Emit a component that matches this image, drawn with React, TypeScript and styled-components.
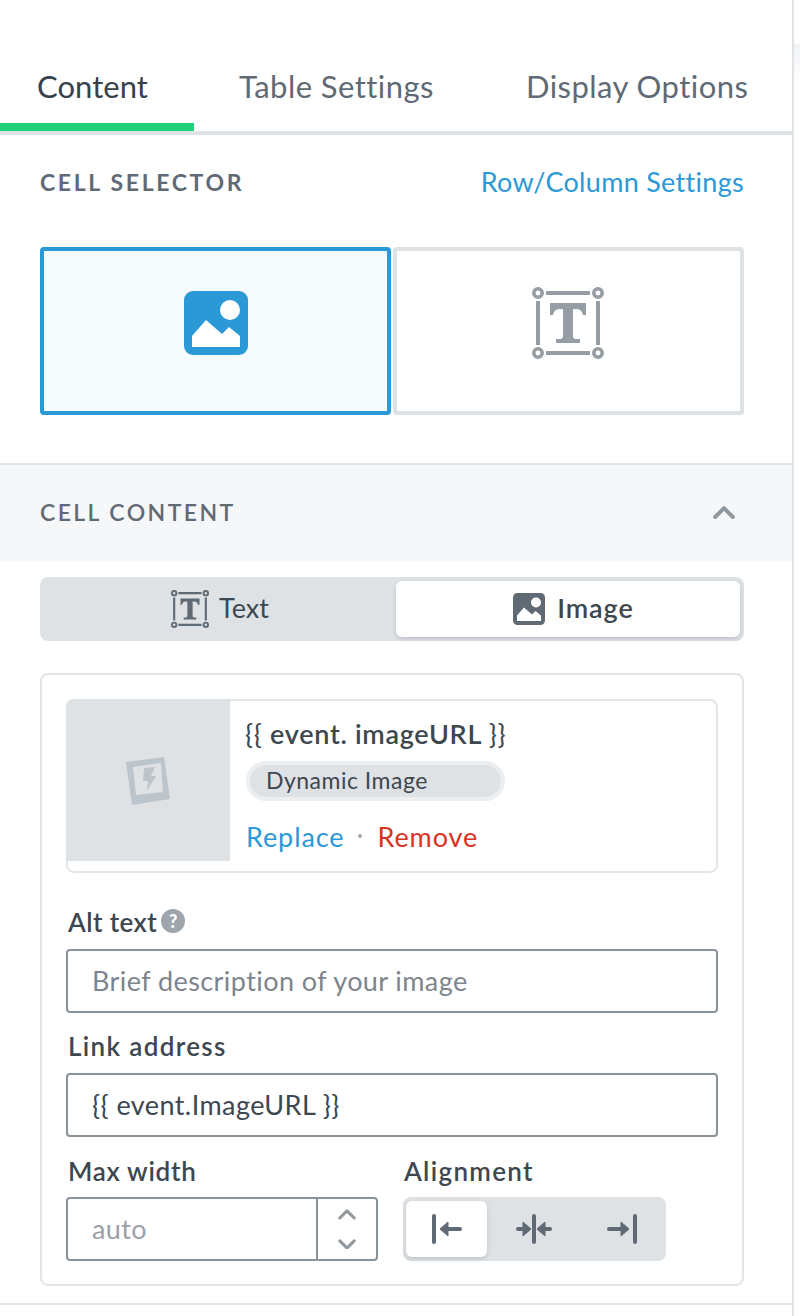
import React from "react";
import styled, { createGlobalStyle } from "styled-components";

const Global = createGlobalStyle`
  html, body { margin: 0; padding: 0; background: #fff; }
  body { font-family: "Lato", "Liberation Sans", sans-serif; color: #3d4750; }
  * { box-sizing: border-box; }
`;

const Page = styled.div`
  width: 800px;
  height: 1316px;
  overflow: hidden;
  display: flex;
  background: #fff;
`;
const Panel = styled.div`
  width: 794px;
  height: 1316px;
  border-right: 2px solid #dfe3e6;
  flex: none;
`;
const Gutter = styled.div`
  flex: 1;
  height: 40px;
  margin-top: 44px;
  background: linear-gradient(#f1f2f4, #fff);
`;
const TabBar = styled.div`
  display: grid;
  grid-template-columns: 194px 332px 1fr;
  border-bottom: 4px solid #dfe3e6;
`;
const Tab = styled.div<{ $active?: boolean; $pad: number }>`
  height: 131px;
  padding: 68px 0 0 ${(p) => p.$pad}px;
  font-size: 31px;
  letter-spacing: ${(p) => (p.$active ? "0.05px" : "0.45px")};
  line-height: 36px;
  white-space: nowrap;
  color: ${(p) => (p.$active ? "#36414a" : "#5f6a74")};
  border-bottom: 8px solid ${(p) => (p.$active ? "#22d07a" : "transparent")};
`;
const SelectorSection = styled.section`
  padding: 30px 48px 48px 40px;
  border-bottom: 2px solid #e3e6e9;
`;
const SectionHead = styled.div`
  display: flex;
  align-items: center;
  justify-content: space-between;
  height: 36px;
`;
const Caps = styled.h2<{ $light?: boolean }>`
  margin: -2px 0 0;
  font-size: 23px;
  line-height: 36px;
  font-weight: ${(p) => (p.$light ? 600 : 700)};
  letter-spacing: ${(p) => (p.$light ? "2.4px" : "2.65px")};
  color: #5f6a74;
  text-transform: uppercase;
`;
const HeadLink = styled.a`
  margin-top: -3px;
  font-size: 27px;
  letter-spacing: 0.3px;
  color: #2b99d6;
  white-space: nowrap;
`;
const Tiles = styled.div`
  margin-top: 46px;
  display: grid;
  grid-template-columns: 351px 351px;
  gap: 2px;
`;
const Tile = styled.div<{ $active?: boolean }>`
  height: 168px;
  padding: 0 ${(p) => (p.$active ? 0 : 2)}px 16px 0;
  border: 4px solid ${(p) => (p.$active ? "#2b99d6" : "#dfe2e5")};
  border-radius: 4px;
  background: ${(p) => (p.$active ? "#f6fbfe" : "#fff")};
  display: flex;
  align-items: center;
  justify-content: center;
`;
const Band = styled.div`
  height: 96px;
  padding: 30px 57px 30px 40px;
  background: #f6f7f9;
  display: flex;
  align-items: center;
  justify-content: space-between;
`;
const Body = styled.div`
  padding: 16px 48px 0 40px;
`;
const Toggle = styled.div`
  height: 64px;
  padding: 4px;
  background: #dfe2e5;
  border-radius: 8px;
  display: grid;
  grid-template-columns: 352px 344px;
`;
const ToggleItem = styled.div<{ $active?: boolean }>`
  display: flex;
  align-items: center;
  justify-content: center;
  padding-left: ${(p) => (p.$active ? 11 : 0)}px;
  gap: ${(p) => (p.$active ? "12px" : "10px")};
  font-size: 27px;
  letter-spacing: ${(p) => (p.$active ? "0.9px" : "0")};
  font-weight: ${(p) => (p.$active ? 600 : 400)};
  border-radius: 6px;
  color: #3d4750;
  background: ${(p) => (p.$active ? "#fff" : "transparent")};
  box-shadow: ${(p) => (p.$active ? "0 2px 4px rgba(90,100,110,.25)" : "none")};
`;
const ToggleLabel = styled.span`
  margin-top: -3px;
`;
const Card = styled.div`
  margin-top: 32px;
  padding: 24px 24px 23px;
  border: 2px solid #e3e6e9;
  border-radius: 8px;
`;
const Preview = styled.div`
  height: 174px;
  border: 2px solid #e3e6e9;
  border-radius: 8px;
  display: flex;
`;
const Thumb = styled.div`
  width: 164px;
  height: 162px;
  margin: -2px 0 0 -2px;
  background: #dfe2e5;
  border-top-left-radius: 8px;
  display: flex;
  align-items: center;
  justify-content: center;
  flex: none;
`;
const Info = styled.div`
  padding: 15px 0 0 15px;
`;
const Title = styled.div`
  font-size: 27px;
  line-height: 36px;
  font-weight: 600;
  letter-spacing: 0.7px;
  color: #3d4750;
  white-space: nowrap;
`;
const Braces = styled.span`
  font-weight: 400;
`;
const Pill = styled.div`
  margin: 9px 0 0 1px;
  width: 259px;
  height: 40px;
  padding-left: 16px;
  border: 4px solid #eceef0;
  border-radius: 20px;
  background: #dfe2e5;
  font-size: 23px;
  letter-spacing: 0.5px;
  line-height: 30px;
  white-space: nowrap;
`;
const Actions = styled.div`
  margin: 17px 0 0 1px;
  display: flex;
  align-items: center;
  height: 36px;
  font-size: 27px;
  letter-spacing: 0.9px;
`;
const ActionLink = styled.a<{ $danger?: boolean }>`
  color: ${(p) => (p.$danger ? "#d9321f" : "#2b99d6")};
`;
const Dot = styled.span`
  width: 4px;
  height: 4px;
  margin: 0 15px 0 14px;
  border-radius: 50%;
  background: #a3aab1;
`;
const Label = styled.label<{ $gap?: number; $pad?: number; $track: number }>`
  display: flex;
  align-items: center;
  gap: 4px;
  height: 36px;
  padding-left: ${(p) => p.$pad ?? 2}px;
  margin-top: ${(p) => p.$gap ?? 0}px;
  font-size: 26px;
  letter-spacing: ${(p) => p.$track}px;
  font-weight: 600;
  color: #3d4750;
  white-space: nowrap;
`;
const Help = styled.span`
  width: 24px;
  height: 24px;
  margin-top: -2px;
  border-radius: 50%;
  background: #9ea5ac;
  color: #fff;
  font-size: 18px;
  letter-spacing: 0;
  line-height: 24px;
  text-align: center;
  font-weight: 900;
`;
const Input = styled.input`
  display: block;
  width: 100%;
  height: 64px;
  margin-top: 9px;
  padding: 0 24px 2px;
  border: 2px solid #8a929a;
  border-radius: 4px;
  outline: none;
  font: 400 27px "Lato", "Liberation Sans", sans-serif;
  letter-spacing: 0.42px;
  color: #3d4750;
  background: #fff;
  &::placeholder { color: #7d858e; opacity: 1; }
`;
const BottomRow = styled.div`
  margin-top: 16px;
  display: grid;
  grid-template-columns: 312px 263px;
  gap: 25px;
`;
const Stepper = styled.div`
  height: 64px;
  margin-top: 8px;
  display: flex;
  border: 2px solid #8a929a;
  border-radius: 4px;
`;
const StepInput = styled.input`
  width: 248px;
  padding: 0 24px 2px;
  border: 0;
  outline: none;
  background: transparent;
  font: 400 27px "Lato", "Liberation Sans", sans-serif;
  letter-spacing: 0.42px;
  &::placeholder { color: #9aa1a9; opacity: 1; }
`;
const StepButtons = styled.div`
  flex: 1;
  border-left: 2px solid #8a929a;
  display: flex;
  flex-direction: column;
  align-items: center;
  justify-content: center;
  gap: 19px;
`;
const Segments = styled.div`
  height: 64px;
  margin-top: 8px;
  padding: 4px 3px;
  background: #dfe2e5;
  border-radius: 8px;
  display: grid;
  grid-template-columns: 81px 94px 1fr;
`;
const Segment = styled.div<{ $active?: boolean }>`
  display: flex;
  align-items: center;
  justify-content: center;
  border-radius: 6px;
  background: ${(p) => (p.$active ? "#fff" : "transparent")};
  box-shadow: ${(p) => (p.$active ? "0 2px 5px rgba(90,100,110,.25)" : "none")};
`;
const EndRule = styled.div`
  margin: 17px -48px 0 -40px;
  height: 2px;
  background: #e3e6e9;
`;

const ImageIcon = ({ size, color }: { size: number; color: string }) => (
  <svg width={size} height={size} viewBox="0 0 64 64">
    <rect width="64" height="64" rx="9" fill={color} />
    <circle cx="46" cy="19" r="10" fill="#fff" />
    <path d="M8 56V45L22 29 38 43 45 36 56 45V56Z" fill="#fff" />
  </svg>
);

const TextIcon = ({ size, color }: { size: number; color: string }) => (
  <svg width={size} height={size} viewBox="0 0 72 72" fill="none">
    {[[6, 6], [66, 6], [6, 66], [66, 66]].map(([x, y]) => (
      <circle key={`${x}-${y}`} cx={x} cy={y} r="4.2" stroke={color} strokeWidth="3.6" />
    ))}
    <path d="M14 6H58M14 66H58M6 14V58M66 14V58" stroke={color} strokeWidth="4" />
    <path
      d="M18 16H54V28H51C50 24 48 22 44 22H41V49C41 51 42 52 44 52H48V56H24V52H28C30 52 31 51 31 49V22H28C24 22 22 24 21 28H18Z"
      fill={color}
    />
  </svg>
);

const Polaroid = () => (
  <svg width="48" height="52" viewBox="0 0 48 52">
    <path
      fillRule="evenodd"
      fill="#bcc4cc"
      d="M2 8L40 3 46 45 8 51ZM9 13L37 9 39 38 12 41Z"
    />
    <path fill="#bcc4cc" d="M20 14L31 13 27 22 32 22 23 37 24 27 19 27Z" />
  </svg>
);

const Chevron = ({ up, size, color, sw }: { up?: boolean; size: number; color: string; sw: number }) => (
  <svg width={size} height={size * 0.6} viewBox="0 0 20 12" fill="none">
    <path
      d={up ? "M2 10L10 2 18 10" : "M2 2L10 10 18 2"}
      stroke={color}
      strokeWidth={sw}
      strokeLinecap="round"
      strokeLinejoin="round"
    />
  </svg>
);

const Arrow = ({ x, dir }: { x: number; dir: 1 | -1 }) => (
  <path d={`M${x} 15l${dir * -8} -7v14z`} fill="#5f6a74" stroke="#5f6a74" strokeWidth="1" strokeLinejoin="round" />
);

export default function App() {
  return (
    <Page>
      <Global />
      <Panel>
        <TabBar>
          <Tab $active $pad={37}>Content</Tab>
          <Tab $pad={45}>Table Settings</Tab>
          <Tab $pad={0}>Display Options</Tab>
        </TabBar>
        <SelectorSection>
          <SectionHead>
            <Caps>Cell Selector</Caps>
            <HeadLink>Row/Column Settings</HeadLink>
          </SectionHead>
          <Tiles>
            <Tile $active><ImageIcon size={64} color="#2b99d6" /></Tile>
            <Tile><TextIcon size={72} color="#969da5" /></Tile>
          </Tiles>
        </SelectorSection>
        <Band>
          <Caps $light>Cell Content</Caps>
          <Chevron up size={22} color="#8f979f" sw={3.6} />
        </Band>
        <Body>
          <Toggle>
            <ToggleItem><TextIcon size={38} color="#5f6a74" /><ToggleLabel>Text</ToggleLabel></ToggleItem>
            <ToggleItem $active><ImageIcon size={32} color="#5f6a74" /><ToggleLabel>Image</ToggleLabel></ToggleItem>
          </Toggle>
          <Card>
            <Preview>
              <Thumb><Polaroid /></Thumb>
              <Info>
                <Title><Braces>{"{{"}</Braces>{" event. imageURL "}<Braces>{"}}"}</Braces></Title>
                <Pill>Dynamic Image</Pill>
                <Actions>
                  <ActionLink>Replace</ActionLink>
                  <Dot />
                  <ActionLink $danger>Remove</ActionLink>
                </Actions>
              </Info>
            </Preview>
            <Label $gap={31} $track={0.4}>Alt text<Help>?</Help></Label>
            <Input placeholder="Brief description of your image" />
            <Label $gap={15} $track={1.35}>Link address</Label>
            <Input defaultValue="{{ event.ImageURL }}" />
            <BottomRow>
              <div>
                <Label $track={0.7}>Max width</Label>
                <Stepper>
                  <StepInput placeholder="auto" />
                  <StepButtons>
                    <Chevron up size={18} color="#8f979f" sw={3.4} />
                    <Chevron size={18} color="#8f979f" sw={3.4} />
                  </StepButtons>
                </Stepper>
              </div>
              <div>
                <Label $pad={1} $track={1.3}>Alignment</Label>
                <Segments>
                  <Segment $active>
                    <svg width="40" height="30" viewBox="0 0 40 30" fill="none">
                      <path d="M7 2V28M20 15H33" stroke="#5f6a74" strokeWidth="4" strokeLinecap="round" />
                      <Arrow x={13} dir={-1} />
                    </svg>
                  </Segment>
                  <Segment>
                    <svg width="40" height="30" viewBox="0 0 40 30" fill="none">
                      <path d="M20 2V28M4 15H10M30 15H36" stroke="#5f6a74" strokeWidth="4" strokeLinecap="round" />
                      <Arrow x={17} dir={1} />
                      <Arrow x={23} dir={-1} />
                    </svg>
                  </Segment>
                  <Segment>
                    <svg width="40" height="30" viewBox="0 0 40 30" fill="none">
                      <path d="M33 2V28M7 15H20" stroke="#5f6a74" strokeWidth="4" strokeLinecap="round" />
                      <Arrow x={27} dir={1} />
                    </svg>
                  </Segment>
                </Segments>
              </div>
            </BottomRow>
          </Card>
          <EndRule />
        </Body>
      </Panel>
      <Gutter />
    </Page>
  );
}
